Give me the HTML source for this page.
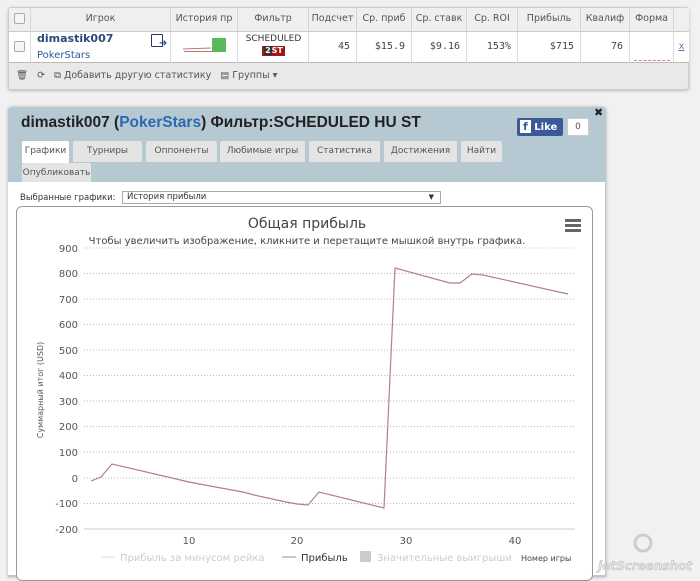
<!DOCTYPE html>
<html><head><meta charset="utf-8"><style>
*{box-sizing:border-box;margin:0;padding:0}
body{width:700px;height:575px;overflow:hidden;background:#f1f1f1;font-family:"DejaVu Sans","Liberation Sans",sans-serif;position:relative;color:#333}
.a{position:absolute}
.tbl{left:8px;top:7px;width:681px;height:83px;background:#e9e9e9;border:1px solid #ccc;border-radius:3px;box-shadow:0 1px 3px #bbb}
.hc{position:absolute;top:0;height:23px;font-size:9.5px;color:#555;text-align:center;line-height:22px;border-right:1px solid #d4d4d4;white-space:nowrap;overflow:hidden;background:#efefef}
.dc{position:absolute;top:23px;height:32px;background:#fff;border-right:1px solid #ddd;border-top:1px solid #ccc;border-bottom:1px solid #bbb;font-size:10px;text-align:right;padding-right:6px;line-height:30px;font-family:"DejaVu Sans Mono","Liberation Mono",monospace;color:#444}
.cb{position:absolute;width:11px;height:11px;border:1px solid #aaa;border-radius:2px;background:#f6f6f6}
.tab{position:absolute;height:21px;background:#e4e4e4;font-size:9px;color:#555;line-height:20px;text-align:center;border-radius:2px 2px 0 0}
</style></head><body>
<div class="a tbl">
 <div class="hc" style="left:0;width:22px"></div>
 <div class="cb" style="left:5px;top:5px"></div>
 <div class="hc" style="left:22px;width:140px">Игрок</div>
 <div class="hc" style="left:162px;width:67px">История пр</div>
 <div class="hc" style="left:229px;width:71px">Фильтр</div>
 <div class="hc" style="left:300px;width:48px">Подсчет</div>
 <div class="hc" style="left:348px;width:55px">Ср. приб</div>
 <div class="hc" style="left:403px;width:55px">Ср. ставк</div>
 <div class="hc" style="left:458px;width:51px">Ср. ROI</div>
 <div class="hc" style="left:509px;width:63px">Прибыль</div>
 <div class="hc" style="left:572px;width:49px">Квалиф</div>
 <div class="hc" style="left:621px;width:44px">Форма</div>
 <div class="hc" style="left:665px;width:15px;border:0"></div>
 <div class="dc" style="left:0;width:22px"></div>
 <div class="cb" style="left:5px;top:33px"></div>
 <div class="dc" style="left:22px;width:140px"></div>
 <div class="a" style="left:28px;top:24px;font-size:11px;font-weight:bold;color:#2a4a7a">dimastik007</div>
 <div class="a" style="left:28px;top:42px;font-size:10px;color:#2a5a9a">PokerStars</div>
 <div class="a" style="left:142px;top:26px;width:12px;height:13px;border:1.5px solid #336;border-radius:1px"></div>
 <div class="a" style="left:150px;top:30px;color:#2a5a9a;font-size:10px;font-weight:bold">➜</div>
 <div class="dc" style="left:162px;width:67px"></div>
 <div class="a" style="left:175px;top:43px;width:28px;height:1px;background:#b77"></div>
 <div class="a" style="left:203px;top:30px;width:14px;height:14px;background:#5cb85c"></div>
 <div class="dc" style="left:229px;width:71px"></div>
 <div class="a" style="left:229px;top:26px;width:71px;text-align:center;font-size:9px;color:#333">SCHEDULED</div>
 <div class="a" style="left:253px;top:38px;width:23px;height:10px;background:#a01818;color:#fff;font-size:8px;font-weight:bold;line-height:10px;text-align:center"><span style="background:#333;padding:0 1px">2</span>ST</div>
 <div class="dc" style="left:300px;width:48px">45</div>
 <div class="dc" style="left:348px;width:55px">$15.9</div>
 <div class="dc" style="left:403px;width:55px">$9.16</div>
 <div class="dc" style="left:458px;width:51px">153%</div>
 <div class="dc" style="left:509px;width:63px">$715</div>
 <div class="dc" style="left:572px;width:49px">76</div>
 <div class="dc" style="left:621px;width:44px"></div>
 <div class="a" style="left:625px;top:52px;width:36px;border-top:1px dashed #c88"></div>
 <div class="dc" style="left:665px;width:15px;border-right:0;text-align:center;padding:0;color:#57a;text-decoration:underline">x</div>
 <div class="a" style="left:7px;top:62px;font-size:9.5px;color:#555;white-space:nowrap">🗑&nbsp;&nbsp;&nbsp;⟳&nbsp;&nbsp;&nbsp;⧉ Добавить другую статистику&nbsp;&nbsp;&nbsp;▤ Группы ▾</div>
</div>

<div class="a" style="left:8px;top:107px;width:598px;height:470px;background:#b6c9d2;border-radius:4px 4px 0 0;box-shadow:0 0 3px #aaa"></div>
<div class="a" style="left:21px;top:114px;font-size:15.5px;font-weight:bold;color:#222;font-family:'Liberation Sans',sans-serif">dimastik007 (<span style="color:#2a6aae">PokerStars</span>) Фильтр:SCHEDULED HU ST</div>
<div class="a" style="left:517px;top:118px;width:46px;height:18px;background:#3b5998;border-radius:2px;color:#fff;font-size:10px;font-weight:bold;line-height:18px;padding-left:3px"><span style="background:#fff;color:#3b5998;padding:0 3px;font-size:11px">f</span> Like</div>
<div class="a" style="left:567px;top:118px;width:22px;height:18px;background:#fff;border:1px solid #ccc;border-radius:2px;font-size:9px;text-align:center;line-height:16px;color:#555">0</div>
<div class="a" style="left:594px;top:106px;font-size:11px;font-weight:bold;color:#222">✖</div>
<div class="tab" style="left:22px;top:141px;width:47px;background:#fff;height:22px">Графики</div>
<div class="tab" style="left:73px;top:141px;width:69px">Турниры</div>
<div class="tab" style="left:146px;top:141px;width:71px">Оппоненты</div>
<div class="tab" style="left:220px;top:141px;width:85px">Любимые игры</div>
<div class="tab" style="left:309px;top:141px;width:71px">Статистика</div>
<div class="tab" style="left:384px;top:141px;width:73px">Достижения</div>
<div class="tab" style="left:461px;top:141px;width:41px">Найти</div>
<div class="tab" style="left:22px;top:163px;width:69px">Опубликовать</div>
<div class="a" style="left:8px;top:182px;width:597px;height:393px;background:#fff"></div>
<div class="a" style="left:20px;top:193px;font-size:8.5px;color:#333">Выбранные графики:</div>
<div class="a" style="left:122px;top:191px;width:319px;height:13px;border:1px solid #aaa;font-size:8.5px;padding-left:4px;line-height:11px">История прибыли<span style="position:absolute;right:6px;font-size:7px">▼</span></div>
<div class="a" style="left:16px;top:206px;width:577px;height:375px;border:1px solid #999;border-radius:6px;background:#fff"></div>
<svg class="a" style="left:0;top:0" width="700" height="575" font-family="DejaVu Sans,Liberation Sans,sans-serif">
<text x="307" y="228" font-size="14" fill="#444" text-anchor="middle">Общая прибыль</text>
<text x="307" y="244" font-size="10" fill="#444" text-anchor="middle">Чтобы увеличить изображение, кликните и перетащите мышкой внутрь графика.</text>
<g fill="#666"><rect x="565" y="219" width="16" height="3"/><rect x="565" y="224" width="16" height="3"/><rect x="565" y="229" width="16" height="3"/></g>
<g stroke="#bbb" stroke-dasharray="1,2">
<line x1="84" x2="575" y1="248" y2="248"/><line x1="84" x2="575" y1="273.5" y2="273.5"/><line x1="84" x2="575" y1="299" y2="299"/><line x1="84" x2="575" y1="324.5" y2="324.5"/><line x1="84" x2="575" y1="350" y2="350"/><line x1="84" x2="575" y1="375.5" y2="375.5"/><line x1="84" x2="575" y1="401" y2="401"/><line x1="84" x2="575" y1="426.5" y2="426.5"/><line x1="84" x2="575" y1="452" y2="452"/><line x1="84" x2="575" y1="478" y2="478"/><line x1="84" x2="575" y1="503.5" y2="503.5"/></g>
<line x1="84" x2="575" y1="529" y2="529" stroke="#ccc"/>
<g font-size="10" fill="#555" text-anchor="end">
<text x="78" y="252">900</text><text x="78" y="277">800</text><text x="78" y="303">700</text><text x="78" y="328">600</text><text x="78" y="354">500</text><text x="78" y="379">400</text><text x="78" y="405">300</text><text x="78" y="430">200</text><text x="78" y="456">100</text><text x="78" y="482">0</text><text x="78" y="507">-100</text><text x="78" y="533">-200</text></g>
<g font-size="10" fill="#555" text-anchor="middle"><text x="189" y="544">10</text><text x="297" y="544">20</text><text x="406" y="544">30</text><text x="515" y="544">40</text></g>
<text transform="translate(43,390) rotate(-90)" font-size="8" fill="#555" text-anchor="middle">Суммарный итог (USD)</text>
<polyline fill="none" stroke="#b58080" stroke-width="1.2" points="91,481 101,477 112,464 189,482 210,486 232,490 243,492 254,495 286,502 297,504 308,505 319,492 384,508 395,268 450,283 460,283 472,274 483,275 568,294"/>
<g font-size="10"><line x1="101" x2="115" y1="557" y2="557" stroke="#ddd"/><text x="120" y="561" fill="#ccc">Прибыль за минусом рейка</text>
<line x1="282" x2="296" y1="557" y2="557" stroke="#b58080"/><text x="301" y="561" fill="#333">Прибыль</text>
<rect x="360" y="551" width="11" height="11" fill="#ccc"/><text x="377" y="561" fill="#ccc">Значительные выигрыши</text>
<text x="521" y="561" font-size="8" fill="#444">Номер игры</text></g>
<text x="598" y="570" font-size="12" font-style="italic" font-weight="bold" fill="#e4e4e4" stroke="#bbb" stroke-width="0.5">jetScreenshot</text>
<circle cx="643" cy="543" r="8" fill="none" stroke="#ccc" stroke-width="3"/>
</svg>
<div class="a" style="left:183px;top:48px;width:28px;height:1px;background:#b77;transform:rotate(-2deg)"></div>
</body></html>
